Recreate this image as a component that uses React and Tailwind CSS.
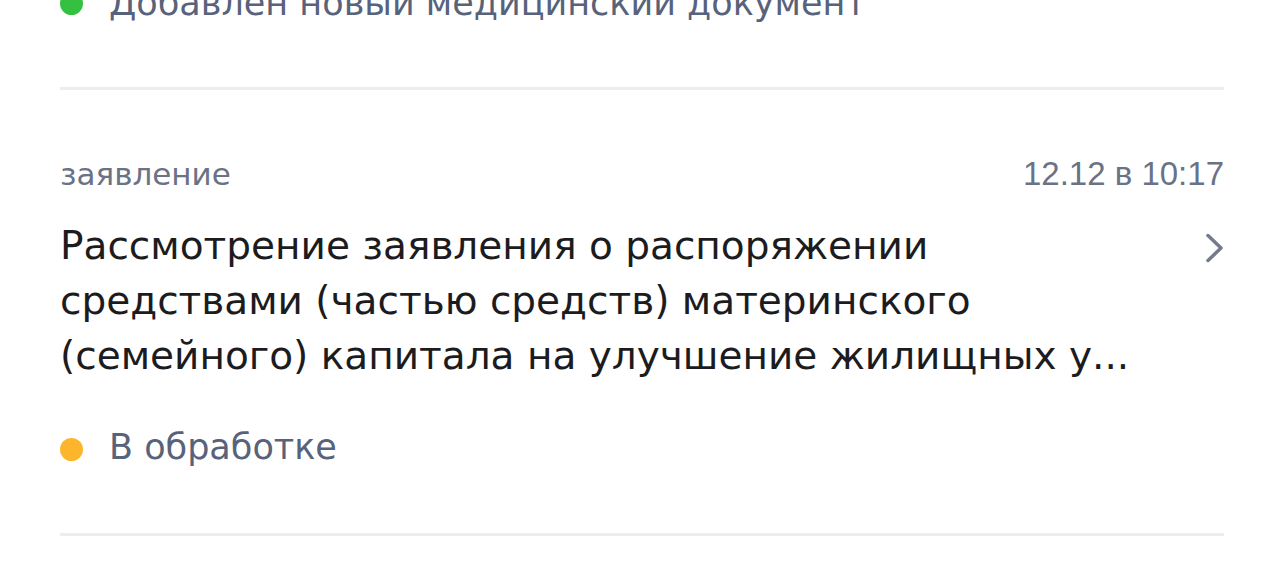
export default function App() {
  return (
    <div className="min-h-[577px] w-[1284px] overflow-hidden bg-white font-['DejaVu_Sans','Liberation_Sans',sans-serif]">
      <div className="px-[60px]">
        {/* previous item, cut by the top edge */}
        <div className="-mt-[17px] flex h-[40px] items-center gap-[26px]">
          <span className="h-[23px] w-[23px] shrink-0 rounded-full bg-[#34c13f]" />
          <span className="text-[35px] leading-[40px] text-[#58627a]">Добавлен новый медицинский документ</span>
        </div>

        <div className="mt-[64px] h-[3px] bg-[#ebedf0]" />

        <div className="pt-[66px]">
          <div className="flex items-center justify-between text-[31px] leading-[36px] text-[#6a7286]">
            <span>заявление</span>
            <span className="font-['Liberation_Sans',Arial,sans-serif] text-[33px]">12.12 в 10:17</span>
          </div>

          <div className="mt-[26px] flex items-start justify-between">
            <p className="text-[39px] leading-[55px] text-[#1c1c1e]">
              Рассмотрение заявления о распоряжении
              <br />
              средствами (частью средств) материнского
              <br />
              (семейного) капитала на улучшение жилищных у...
            </p>
            <svg className="mt-[14px] shrink-0" width="20" height="32" viewBox="0 0 20 32" fill="none">
              <path d="M4 3.5 L17 16 L4 28.5" stroke="#737b8c" strokeWidth="3.5" strokeLinecap="round" strokeLinejoin="round" />
            </svg>
          </div>

          <div className="mt-[44px] flex h-[40px] items-center gap-[26px]">
            <span className="mt-[4px] h-[23px] w-[23px] shrink-0 rounded-full bg-[#fdb62b]" />
            <span className="text-[35px] leading-[40px] text-[#58627a]">В обработке</span>
          </div>
        </div>

        <div className="mt-[66px] h-[3px] bg-[#ebedf0]" />
      </div>
    </div>
  );
}
